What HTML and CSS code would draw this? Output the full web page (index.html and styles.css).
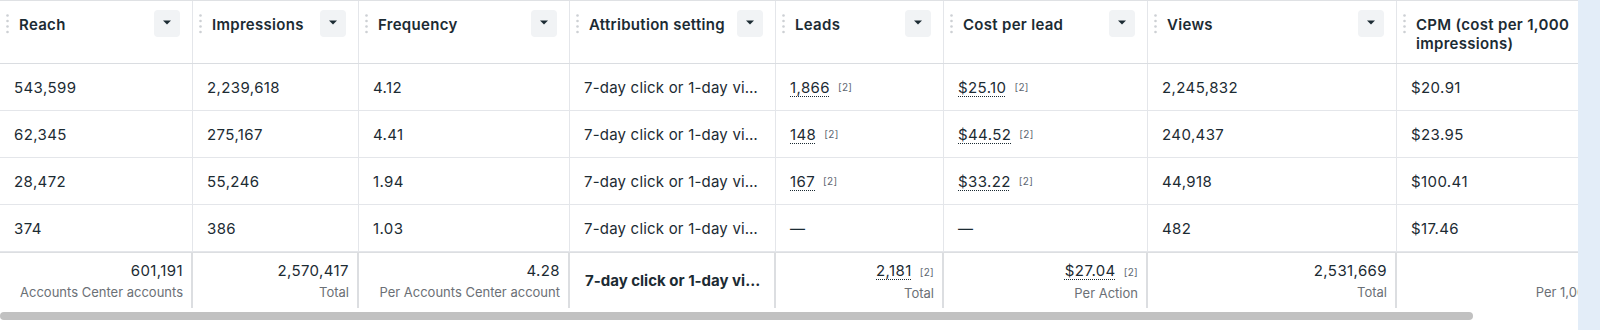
FILE: index.html
```html
<!DOCTYPE html>
<html lang="en">
<head>
<meta charset="utf-8">
<title>Ads report table</title>
<link rel="stylesheet" href="styles.css">
</head>
<body>
<div class="page">
  <div class="viewport">
    <div class="table">
      <div class="row head">
        <div class="hcell first"><svg class="grip" width="3" height="20" viewBox="0 0 3 20"><circle cx="1.5" cy="1.5" r="1.3"/><circle cx="1.5" cy="7" r="1.3"/><circle cx="1.5" cy="12.5" r="1.3"/><circle cx="1.5" cy="18" r="1.3"/></svg><span class="title">Reach</span><span class="sort"><svg width="8" height="5" viewBox="0 0 8 5"><path d="M0 0.5h8L4 4.5z"/></svg></span></div>
        <div class="hcell"><svg class="grip" width="3" height="20" viewBox="0 0 3 20"><circle cx="1.5" cy="1.5" r="1.3"/><circle cx="1.5" cy="7" r="1.3"/><circle cx="1.5" cy="12.5" r="1.3"/><circle cx="1.5" cy="18" r="1.3"/></svg><span class="title">Impressions</span><span class="sort"><svg width="8" height="5" viewBox="0 0 8 5"><path d="M0 0.5h8L4 4.5z"/></svg></span></div>
        <div class="hcell"><svg class="grip" width="3" height="20" viewBox="0 0 3 20"><circle cx="1.5" cy="1.5" r="1.3"/><circle cx="1.5" cy="7" r="1.3"/><circle cx="1.5" cy="12.5" r="1.3"/><circle cx="1.5" cy="18" r="1.3"/></svg><span class="title">Frequency</span><span class="sort"><svg width="8" height="5" viewBox="0 0 8 5"><path d="M0 0.5h8L4 4.5z"/></svg></span></div>
        <div class="hcell"><svg class="grip" width="3" height="20" viewBox="0 0 3 20"><circle cx="1.5" cy="1.5" r="1.3"/><circle cx="1.5" cy="7" r="1.3"/><circle cx="1.5" cy="12.5" r="1.3"/><circle cx="1.5" cy="18" r="1.3"/></svg><span class="title">Attribution setting</span><span class="sort"><svg width="8" height="5" viewBox="0 0 8 5"><path d="M0 0.5h8L4 4.5z"/></svg></span></div>
        <div class="hcell"><svg class="grip" width="3" height="20" viewBox="0 0 3 20"><circle cx="1.5" cy="1.5" r="1.3"/><circle cx="1.5" cy="7" r="1.3"/><circle cx="1.5" cy="12.5" r="1.3"/><circle cx="1.5" cy="18" r="1.3"/></svg><span class="title">Leads</span><span class="sort"><svg width="8" height="5" viewBox="0 0 8 5"><path d="M0 0.5h8L4 4.5z"/></svg></span></div>
        <div class="hcell"><svg class="grip" width="3" height="20" viewBox="0 0 3 20"><circle cx="1.5" cy="1.5" r="1.3"/><circle cx="1.5" cy="7" r="1.3"/><circle cx="1.5" cy="12.5" r="1.3"/><circle cx="1.5" cy="18" r="1.3"/></svg><span class="title">Cost per lead</span><span class="sort"><svg width="8" height="5" viewBox="0 0 8 5"><path d="M0 0.5h8L4 4.5z"/></svg></span></div>
        <div class="hcell"><svg class="grip" width="3" height="20" viewBox="0 0 3 20"><circle cx="1.5" cy="1.5" r="1.3"/><circle cx="1.5" cy="7" r="1.3"/><circle cx="1.5" cy="12.5" r="1.3"/><circle cx="1.5" cy="18" r="1.3"/></svg><span class="title">Views</span><span class="sort"><svg width="8" height="5" viewBox="0 0 8 5"><path d="M0 0.5h8L4 4.5z"/></svg></span></div>
        <div class="hcell"><svg class="grip" width="3" height="20" viewBox="0 0 3 20"><circle cx="1.5" cy="1.5" r="1.3"/><circle cx="1.5" cy="7" r="1.3"/><circle cx="1.5" cy="12.5" r="1.3"/><circle cx="1.5" cy="18" r="1.3"/></svg><span class="title">CPM (cost per 1,000 impressions)</span><span class="sort"><svg width="8" height="5" viewBox="0 0 8 5"><path d="M0 0.5h8L4 4.5z"/></svg></span></div>
      </div>

      <div class="row body">
        <div class="cell first">543,599</div>
        <div class="cell">2,239,618</div>
        <div class="cell">4.12</div>
        <div class="cell"><span class="ell">7-day click or 1-day view</span></div>
        <div class="cell"><span class="dot">1,866</span><span class="note">[2]</span></div>
        <div class="cell"><span class="dot">$25.10</span><span class="note">[2]</span></div>
        <div class="cell">2,245,832</div>
        <div class="cell">$20.91</div>
      </div>
      <div class="row body">
        <div class="cell first">62,345</div>
        <div class="cell">275,167</div>
        <div class="cell">4.41</div>
        <div class="cell"><span class="ell">7-day click or 1-day view</span></div>
        <div class="cell"><span class="dot">148</span><span class="note">[2]</span></div>
        <div class="cell"><span class="dot">$44.52</span><span class="note">[2]</span></div>
        <div class="cell">240,437</div>
        <div class="cell">$23.95</div>
      </div>
      <div class="row body">
        <div class="cell first">28,472</div>
        <div class="cell">55,246</div>
        <div class="cell">1.94</div>
        <div class="cell"><span class="ell">7-day click or 1-day view</span></div>
        <div class="cell"><span class="dot">167</span><span class="note">[2]</span></div>
        <div class="cell"><span class="dot">$33.22</span><span class="note">[2]</span></div>
        <div class="cell">44,918</div>
        <div class="cell">$100.41</div>
      </div>
      <div class="row body">
        <div class="cell first">374</div>
        <div class="cell">386</div>
        <div class="cell">1.03</div>
        <div class="cell"><span class="ell">7-day click or 1-day view</span></div>
        <div class="cell">—</div>
        <div class="cell">—</div>
        <div class="cell">482</div>
        <div class="cell">$17.46</div>
      </div>

      <div class="row foot">
        <div class="fcell first"><div class="val">601,191</div><div class="lbl">Accounts Center accounts</div></div>
        <div class="fcell"><div class="val">2,570,417</div><div class="lbl">Total</div></div>
        <div class="fcell"><div class="val">4.28</div><div class="lbl">Per Accounts Center account</div></div>
        <div class="fcell attr"><span class="ell strong">7-day click or 1-day view</span></div>
        <div class="fcell"><div class="val"><span class="dot">2,181</span><span class="note">[2]</span></div><div class="lbl">Total</div></div>
        <div class="fcell"><div class="val"><span class="dot">$27.04</span><span class="note">[2]</span></div><div class="lbl">Per Action</div></div>
        <div class="fcell"><div class="val">2,531,669</div><div class="lbl">Total</div></div>
        <div class="fcell"><div class="val">$22.94</div><div class="lbl">Per 1,000 impressions</div></div>
      </div>
    </div>
    <div class="scroll"><div class="thumb"></div></div>
  </div>
  <div class="side"></div>
</div>
</body>
</html>
```

FILE: styles.css
```css
* { box-sizing: border-box; }

html, body {
  margin: 0;
  padding: 0;
  background: #ffffff;
}

body {
  font-family: Inter, "Noto Sans", "Liberation Sans", sans-serif;
  color: #1c2b33;
  font-size: 15px;
  letter-spacing: 0.4px;
}

.page {
  display: flex;
  width: 1600px;
  height: 330px;
}

.viewport {
  width: 1578px;
  height: 330px;
  overflow: hidden;
  flex: none;
}

.side {
  flex: 1;
  background: #e3edf8;
}

.table {
  width: 1681px;
}

.row {
  display: grid;
  grid-template-columns: 193px 166px 211px 206px 168px 204px 249px 284px;
}

/* header */
.head {
  height: 64px;
  border-top: 1px solid #dfe1e4;
  border-bottom: 1px solid #dadde1;
}

.hcell {
  display: flex;
  align-items: flex-start;
  padding: 9px 12px 0 6px;
  border-right: 1px solid #e4e6ea;
}

.grip {
  flex: none;
  margin-top: 4px;
  fill: #cdd0d4;
}

.title {
  flex: 1;
  min-width: 0;
  margin-left: 10px;
  padding-top: 5px;
  font-weight: 600;
  font-size: 15px;
  line-height: 19px;
  letter-spacing: 0.3px;
  color: #1c2b33;
}

.sort {
  flex: none;
  width: 26px;
  height: 27px;
  margin-left: 8px;
  border-radius: 4px;
  background: #f1f3f5;
  display: flex;
  align-items: center;
  justify-content: center;
}

.sort svg {
  fill: #1c2b33;
  margin-top: -2px;
}

/* body rows */
.body {
  height: 47px;
  border-bottom: 1px solid #e4e6ea;
}

.cell {
  display: flex;
  align-items: center;
  min-width: 0;
  padding: 0 13px 0 14px;
  border-right: 1px solid #e4e6ea;
  font-size: 15px;
  white-space: nowrap;
}

.ell {
  display: block;
  min-width: 0;
  overflow: hidden;
  text-overflow: ellipsis;
  white-space: nowrap;
  letter-spacing: 0.2px;
}

.cell .ell {
  margin-right: -2px;
}

.strong {
  font-weight: 700;
  letter-spacing: 0;
}

.dot {
  text-decoration: underline dotted #1c2b33;
  text-decoration-thickness: 1px;
  text-underline-offset: 3px;
}

.note {
  margin-left: 8px;
  font-size: 10px;
  letter-spacing: 0.3px;
  color: #5d6670;
}

/* footer */
.foot {
  height: 56px;
  border-top: 1px solid #dcdee1;
}

.fcell {
  display: flex;
  flex-direction: column;
  align-items: flex-end;
  min-width: 0;
  padding: 8px 8px 0 14px;
  border-right: 2px solid #dcdee1;
  white-space: nowrap;
}

.fcell.attr {
  align-items: stretch;
  justify-content: center;
  padding: 0 12px 0 15px;
}

.val {
  font-size: 15px;
  line-height: 20px;
}

.lbl {
  margin-top: 2px;
  font-size: 13px;
  line-height: 18px;
  letter-spacing: 0;
  color: #6b7076;
}

/* scrollbar */
.scroll {
  margin-top: 4px;
  height: 8px;
}

.thumb {
  width: 1473px;
  height: 8px;
  border-radius: 4px;
  background: #c1c1c1;
}
```
